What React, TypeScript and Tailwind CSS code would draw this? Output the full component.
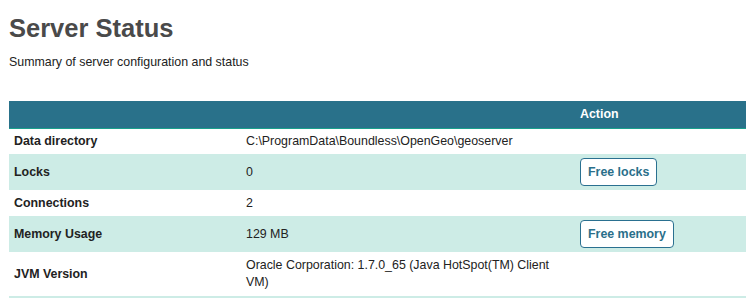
import React from 'react';

type Row = {
  label: string;
  value: string;
  action?: string;
  height: string;
  shaded?: boolean;
};

const rows: Row[] = [
  { label: 'Data directory', value: 'C:\\ProgramData\\Boundless\\OpenGeo\\geoserver', height: 'h-[26px]' },
  { label: 'Locks', value: '0', action: 'Free locks', height: 'h-[36px]', shaded: true },
  { label: 'Connections', value: '2', height: 'h-[26px]' },
  { label: 'Memory Usage', value: '129 MB', action: 'Free memory', height: 'h-[36px]', shaded: true },
  { label: 'JVM Version', value: 'Oracle Corporation: 1.7.0_65 (Java HotSpot(TM) Client VM)', height: 'h-[44px]' },
];

const App: React.FC = () => {
  return (
    <div className="min-h-[298px] bg-white pl-[9px] pr-[3px] font-['Liberation_Sans',Arial,sans-serif] text-[12.4px] text-[#222]">
      <h1 className="pt-[12px] text-[25.5px] font-bold leading-[32px] text-[#4a4a4a]">Server Status</h1>
      <p className="mt-[11px] leading-[14px] text-[#222]">Summary of server configuration and status</p>
      <table className="mt-[32px] w-[737px] table-fixed border-collapse">
        <thead>
          <tr className="h-[27px] border-b border-[#19a08c] bg-[#29718a] text-white">
            <th className="w-[231px]" />
            <th className="w-[340px]" />
            <th className="text-left font-bold">Action</th>
          </tr>
        </thead>
        <tbody>
          {rows.map((row) => (
            <tr key={row.label} className={`${row.height} ${row.shaded ? 'bg-[#cdece6]' : 'bg-white'}`}>
              <td className="pl-[5px] align-middle font-bold leading-[17px]">{row.label}</td>
              <td className="pl-[6px] pr-[10px] align-middle leading-[17px]">{row.value}</td>
              <td className="align-middle">
                {row.action && (
                  <button className="h-[28px] rounded-[4px] border border-[#2a7090] bg-white px-[7px] text-[12.4px] font-bold text-[#2a6f8a]">
                    {row.action}
                  </button>
                )}
              </td>
            </tr>
          ))}
          <tr className="h-[4px] bg-[#cdece6]">
            <td colSpan={3} />
          </tr>
        </tbody>
      </table>
    </div>
  );
};

export default App;
